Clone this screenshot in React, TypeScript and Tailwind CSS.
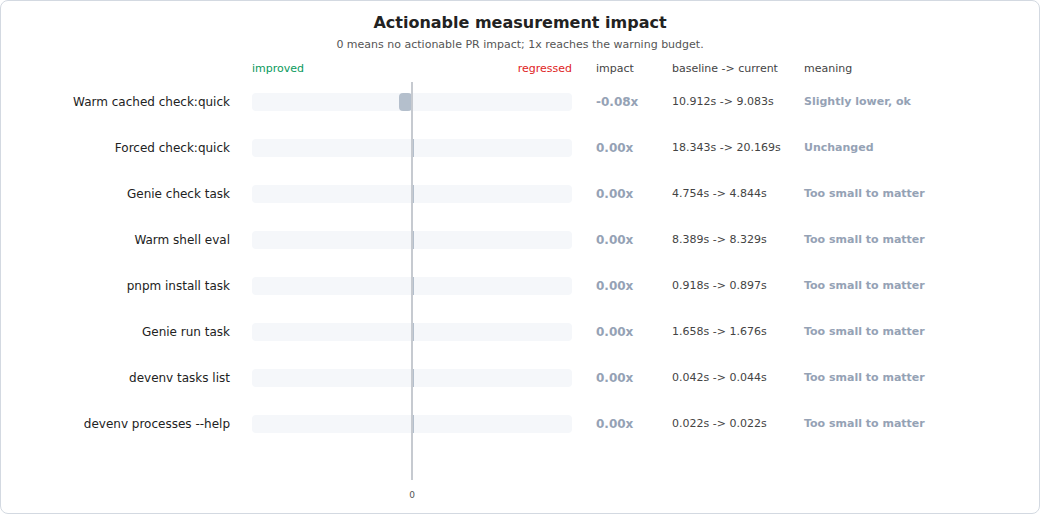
const rows = [
  { label: 'Warm cached check:quick', impact: '-0.08x', change: '10.912s -> 9.083s', meaning: 'Slightly lower, ok', bar: 13 },
  { label: 'Forced check:quick', impact: '0.00x', change: '18.343s -> 20.169s', meaning: 'Unchanged', bar: 0 },
  { label: 'Genie check task', impact: '0.00x', change: '4.754s -> 4.844s', meaning: 'Too small to matter', bar: 0 },
  { label: 'Warm shell eval', impact: '0.00x', change: '8.389s -> 8.329s', meaning: 'Too small to matter', bar: 0 },
  { label: 'pnpm install task', impact: '0.00x', change: '0.918s -> 0.897s', meaning: 'Too small to matter', bar: 0 },
  { label: 'Genie run task', impact: '0.00x', change: '1.658s -> 1.676s', meaning: 'Too small to matter', bar: 0 },
  { label: 'devenv tasks list', impact: '0.00x', change: '0.042s -> 0.044s', meaning: 'Too small to matter', bar: 0 },
  { label: 'devenv processes --help', impact: '0.00x', change: '0.022s -> 0.022s', meaning: 'Too small to matter', bar: 0 },
];

export default function App() {
  return (
    <div className="w-[1040px] h-[514px] bg-white" style={{ fontFamily: '"DejaVu Sans", sans-serif' }}>
      <div className="relative w-full h-full border border-[#d3d9e1] rounded-lg">
        <div className="pt-[10px] text-center">
          <h1 className="text-[16px] leading-[24px] font-bold text-[#222]">Actionable measurement impact</h1>
          <p className="text-[11px] leading-[16px] mt-[2px] text-[#555]">0 means no actionable PR impact; 1x reaches the warning budget.</p>
        </div>
        <div className="flex text-[11px] leading-[16px] mt-[8px] text-[#444]">
          <div className="w-[251px] shrink-0" />
          <div className="w-[320px] flex justify-between">
            <span className="text-[#0a9a5c]">improved</span>
            <span className="text-[#e02424]">regressed</span>
          </div>
          <div className="w-[24px]" />
          <div className="w-[76px]">impact</div>
          <div className="w-[132px]">baseline -&gt; current</div>
          <div>meaning</div>
        </div>
        <div className="mt-[2px]">
          {rows.map((r) => (
            <div key={r.label} className="flex items-center h-[46px]">
              <div className="w-[229px] shrink-0 text-right text-[12px] text-[#222]">{r.label}</div>
              <div className="w-[22px]" />
              <div className="w-[320px] h-[18px] rounded bg-[#f5f7fa] relative">
                {r.bar > 0 ? (
                  <div className="absolute top-0 h-full rounded bg-[#b4bfcc]" style={{ left: 160 - r.bar, width: r.bar }} />
                ) : (
                  <div className="absolute top-0 h-full left-[160px] w-[2px] bg-[#b4bfcc]" />
                )}
              </div>
              <div className="w-[24px]" />
              <div className="w-[76px] text-[12px] font-bold text-[#95a2b5]">{r.impact}</div>
              <div className="w-[132px] text-[11px] text-[#444]">{r.change}</div>
              <div className="text-[11px] font-bold text-[#95a2b5]">{r.meaning}</div>
            </div>
          ))}
        </div>
        <div className="absolute left-[410px] top-[81px] w-[2px] h-[398px] bg-[#c6cad0]" />
        <div className="absolute left-[404px] top-[488px] w-[14px] text-center text-[9px] leading-[12px] text-[#555]">0</div>
      </div>
    </div>
  );
}
